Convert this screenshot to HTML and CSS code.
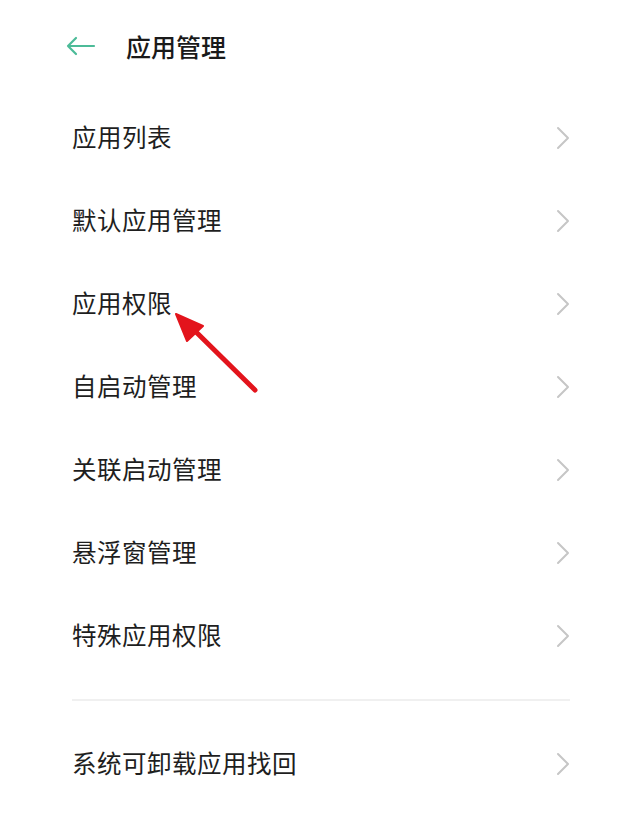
FILE: index.html
```html
<!DOCTYPE html>
<html lang="zh-CN">
<head>
<meta charset="utf-8">
<link rel="stylesheet" href="styles.css">
</head>
<body>
<div class="page">
  <header class="topbar">
    <svg class="back" width="30" height="20" viewBox="0 0 30 20">
      <path d="M2 10 H28 M10 2 L2 10 L10 18" fill="none" stroke="#4cbb98" stroke-width="2.2" stroke-linecap="round" stroke-linejoin="round"/>
    </svg>
    <h1 class="title">应用管理</h1>
  </header>
  <ul class="list">
    <li class="item"><span>应用列表</span><svg class="chev" width="14" height="24" viewBox="0 0 14 24"><path d="M2 2 L12 12 L2 22" /></svg></li>
    <li class="item"><span>默认应用管理</span><svg class="chev" width="14" height="24" viewBox="0 0 14 24"><path d="M2 2 L12 12 L2 22" /></svg></li>
    <li class="item"><span>应用权限</span><svg class="chev" width="14" height="24" viewBox="0 0 14 24"><path d="M2 2 L12 12 L2 22" /></svg></li>
    <li class="item"><span>自启动管理</span><svg class="chev" width="14" height="24" viewBox="0 0 14 24"><path d="M2 2 L12 12 L2 22" /></svg></li>
    <li class="item"><span>关联启动管理</span><svg class="chev" width="14" height="24" viewBox="0 0 14 24"><path d="M2 2 L12 12 L2 22" /></svg></li>
    <li class="item"><span>悬浮窗管理</span><svg class="chev" width="14" height="24" viewBox="0 0 14 24"><path d="M2 2 L12 12 L2 22" /></svg></li>
    <li class="item"><span>特殊应用权限</span><svg class="chev" width="14" height="24" viewBox="0 0 14 24"><path d="M2 2 L12 12 L2 22" /></svg></li>
  </ul>
  <div class="divider"></div>
  <ul class="list list2">
    <li class="item"><span>系统可卸载应用找回</span><svg class="chev" width="14" height="24" viewBox="0 0 14 24"><path d="M2 2 L12 12 L2 22" /></svg></li>
  </ul>
  <svg class="annot" width="640" height="822" viewBox="0 0 640 822">
    <line x1="255" y1="390" x2="190" y2="326" stroke="#e3141c" stroke-width="5" stroke-linecap="round"/>
    <polygon points="176,314 203,326 187,341" fill="#e3141c" stroke="#e3141c" stroke-width="2" stroke-linejoin="round"/>
  </svg>
</div>
</body>
</html>
```
FILE: styles.css
```css
html, body {
  margin: 0;
  padding: 0;
  background: #ffffff;
}
body {
  font-family: "Noto Sans CJK SC", "Noto Sans", sans-serif;
  color: #1c1c1c;
}
.page {
  position: relative;
  width: 640px;
  height: 822px;
  overflow: hidden;
}
.topbar {
  height: 92px;
  display: flex;
  align-items: center;
  padding-left: 66px;
  box-sizing: border-box;
}
.back {
  display: block;
  margin-right: 30px;
}
.title {
  margin: 0;
  font-size: 25px;
  font-weight: 500;
  line-height: 1;
  color: #1a1a1a;
}
.list {
  list-style: none;
  margin: 0;
  padding: 4px 0 0 0;
}
.item {
  height: 83px;
  display: flex;
  align-items: center;
  justify-content: space-between;
  padding: 0 70px 0 72px;
  font-size: 24.5px;
  letter-spacing: 0.5px;
  line-height: 1;
  color: #1e1e1e;
}
.chev {
  display: block;
}
.chev path {
  fill: none;
  stroke: #c6c6c6;
  stroke-width: 2;
  stroke-linecap: round;
  stroke-linejoin: round;
}
.divider {
  height: 2px;
  background: #f0f0f0;
  margin: 22px 70px 0 72px;
}
.list2 {
  padding-top: 21px;
}
.annot {
  position: absolute;
  left: 0;
  top: 0;
  pointer-events: none;
}
```
